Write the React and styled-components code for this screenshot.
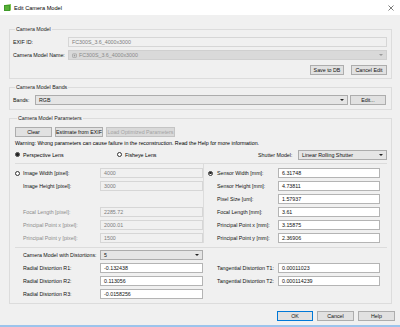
import styled, { createGlobalStyle } from "styled-components";

const GlobalStyle = createGlobalStyle`
  html, body {
    margin: 0;
    padding: 0;
    background: #f0f0f0;
  }
  body {
    font-family: "Liberation Sans", Arial, sans-serif;
    font-size: 5.3px;
    color: #000;
  }
`;

const Window = styled.div`
  box-sizing: border-box;
  width: 400px;
  height: 327px;
  display: flex;
  flex-direction: column;
  background: #f0f0f0;
  border-bottom: 2px solid #9cc4ec;
  overflow: hidden;
`;

const TitleBar = styled.div`
  display: flex;
  align-items: center;
  height: 15px;
  padding: 0 6px 0 4px;
  background: #fff;
  font-size: 5.6px;
  > span {
    flex: 1;
    margin-left: 3px;
  }
`;

const Body = styled.div`
  display: flex;
  flex-direction: column;
  padding: 11px 8px 0 9px;
  flex: 1;
`;

const Group = styled.fieldset`
  margin: ${(p) => p.$top || 0}px 0 0 0;
  padding: ${(p) => p.$pad || "5px 4px 3px 3px"};
  border: 1px solid #dcdcdc;
  border-radius: 0;
  min-width: 0;
  > legend {
    padding: 0 1px;
    margin-left: 2px;
    line-height: 6px;
    color: #222;
  }
`;

const Row = styled.div`
  display: flex;
  align-items: center;
  height: 10px;
  margin-top: ${(p) => p.$top || 0}px;
  justify-content: ${(p) => p.$justify || "flex-start"};
  gap: ${(p) => p.$gap || 0}px;
`;

const Label = styled.div`
  width: ${(p) => p.$w}px;
  flex: none;
  white-space: nowrap;
  color: ${(p) => (p.$dim ? "#8a8a8a" : "#111")};
`;

const Input = styled.div`
  box-sizing: border-box;
  height: ${(p) => p.$h || 10}px;
  width: ${(p) => (p.$w ? `${p.$w}px` : "auto")};
  flex: ${(p) => (p.$w ? "none" : 1)};
  display: flex;
  align-items: center;
  padding-left: 3px;
  border: 1px solid ${(p) => (p.$off ? "#d6d6d6" : "#b4b4b4")};
  background: ${(p) => (p.$off ? "#f0f0f0" : "#fff")};
  color: ${(p) => (p.$off ? "#7d7d7d" : "#111")};
  white-space: nowrap;
`;

const Select = styled.div`
  box-sizing: border-box;
  height: 10px;
  width: ${(p) => (p.$w ? `${p.$w}px` : "auto")};
  flex: ${(p) => (p.$w ? "none" : 1)};
  display: flex;
  align-items: center;
  gap: 2px;
  padding: 0 3px;
  border: 1px solid ${(p) => (p.$off ? "#cfcfcf" : "#acacac")};
  background: ${(p) => (p.$off ? "#d9d9d9" : "#e5e5e5")};
  color: ${(p) => (p.$off ? "#8a8a8a" : "#111")};
  white-space: nowrap;
  > span {
    flex: 1;
  }
`;

const Caret = styled.i`
  width: 0;
  height: 0;
  border-left: 2px solid transparent;
  border-right: 2px solid transparent;
  border-top: 2px solid ${(p) => (p.$off ? "#9a9a9a" : "#222")};
`;

const Button = styled.div`
  box-sizing: border-box;
  height: 10px;
  width: ${(p) => p.$w}px;
  flex: none;
  display: flex;
  align-items: center;
  justify-content: center;
  border: 1px solid ${(p) => (p.$primary ? "#0078d7" : p.$off ? "#c4c4c4" : "#adadad")};
  background: ${(p) => (p.$off ? "#d9d9d9" : "#e1e1e1")};
  color: ${(p) => (p.$off ? "#a3a3a3" : "#111")};
  white-space: nowrap;
`;

const Radio = styled.span`
  box-sizing: border-box;
  width: 5px;
  height: 5px;
  flex: none;
  border-radius: 50%;
  border: 0.8px solid #333;
  background: #fff;
  display: flex;
  align-items: center;
  justify-content: center;
  margin-right: ${(p) => p.$gap || 3}px;
  &::after {
    content: "";
    width: 2.2px;
    height: 2.2px;
    border-radius: 50%;
    background: ${(p) => (p.$on ? "#222" : "transparent")};
  }
`;

const Warning = styled.div`
  margin-top: 3px;
  line-height: 6px;
  white-space: nowrap;
`;

const Split = styled.div`
  display: grid;
  grid-template-columns: 188px 1fr;
  margin: ${(p) => p.$top || 0}px 0 0 0;
  border-top: 1px solid #dcdcdc;
`;

const Column = styled.div`
  display: flex;
  flex-direction: column;
  gap: 3px;
  padding: ${(p) => p.$pad || "4px 0 0 0"};
  border-left: ${(p) => (p.$divider ? "1px solid #dcdcdc" : "none")};
`;

const Slot = styled.span`
  width: ${(p) => p.$w}px;
  flex: none;
  display: flex;
`;

const Footer = styled.div`
  display: flex;
  justify-content: flex-end;
  gap: 4px;
  padding-top: 7px;
  margin-right: -3px;
`;

function AppIcon() {
  return (
    <svg width="7" height="7" viewBox="0 0 7 7">
      <rect x="0" y="1" width="6" height="6" fill="#3f9a2a" />
      <path d="M1 1 L7 0 L7 6 L6 7 L6 1 Z" fill="#7cc24a" />
      <rect x="1" y="2" width="4" height="4" fill="#58b036" />
    </svg>
  );
}

function CloseIcon() {
  return (
    <svg width="6" height="6" viewBox="0 0 6 6">
      <path d="M0.5 0.5 L5.5 5.5 M5.5 0.5 L0.5 5.5" stroke="#444" strokeWidth="0.7" />
    </svg>
  );
}

function CamIcon() {
  return (
    <svg width="5" height="5" viewBox="0 0 5 5">
      <rect x="0.4" y="0.9" width="4.2" height="3.4" rx="0.6" fill="none" stroke="#9a9a9a" strokeWidth="0.7" />
      <circle cx="2.5" cy="2.6" r="0.8" fill="#9a9a9a" />
    </svg>
  );
}

const pixelRows = [
  { label: "Image Width [pixel]:", value: "4000", radio: true },
  { label: "Image Height [pixel]:", value: "3000" },
  null,
  { label: "Focal Length [pixel]:", value: "2285.72", dim: true },
  { label: "Principal Point x [pixel]:", value: "2000.01", dim: true },
  { label: "Principal Point y [pixel]:", value: "1500", dim: true },
];

const mmRows = [
  { label: "Sensor Width [mm]:", value: "6.31748", radio: true },
  { label: "Sensor Height [mm]:", value: "4.73811" },
  { label: "Pixel Size [um]:", value: "1.57937" },
  { label: "Focal Length [mm]:", value: "3.61" },
  { label: "Principal Point x [mm]:", value: "3.15875" },
  { label: "Principal Point y [mm]:", value: "2.36906" },
];

const radial = [
  { label: "Radial Distortion R1:", value: "-0.132438" },
  { label: "Radial Distortion R2:", value: "0.113056" },
  { label: "Radial Distortion R3:", value: "-0.0158256" },
];

const tangential = [
  { label: "Tangential Distortion T1:", value: "0.00011023" },
  { label: "Tangential Distortion T2:", value: "0.000114239" },
];

export default function App() {
  return (
    <Window>
      <GlobalStyle />
      <TitleBar>
        <AppIcon />
        <span>Edit Camera Model</span>
        <CloseIcon />
      </TitleBar>

      <Body>
        <Group>
          <legend>Camera Model</legend>
          <Row>
            <Label $w={55}>EXIF ID:</Label>
            <Input $off>FC300S_3.6_4000x3000</Input>
          </Row>
          <Row $top={3}>
            <Label $w={55}>Camera Model Name:</Label>
            <Select $off>
              <CamIcon />
              <span>FC300S_3.6_4000x3000</span>
              <Caret $off />
            </Select>
          </Row>
          <Row $top={5} $justify="flex-end" $gap={7}>
            <Button $w={34}>Save to DB</Button>
            <Button $w={36}>Cancel Edit</Button>
          </Row>
        </Group>

        <Group $top={5} $pad="5px 5px 4px 3px">
          <legend>Camera Model Bands</legend>
          <Row $gap={2}>
            <Label $w={20}>Bands:</Label>
            <Select>
              <span>RGB</span>
              <Caret />
            </Select>
            <Button $w={36}>Edit...</Button>
          </Row>
        </Group>

        <Group $top={5} $pad="6px 4px 4px 5px">
          <legend>Camera Model Parameters</legend>
          <Row $gap={3}>
            <Button $w={37}>Clear</Button>
            <Button $w={48}>Estimate from EXIF</Button>
            <Button $w={69} $off>
              Load Optimized Parameters
            </Button>
          </Row>
          <Warning>
            Warning: Wrong parameters can cause failure in the reconstruction. Read the Help for
            more information.
          </Warning>
          <Row $top={4}>
            <Slot $w={102}>
              <Radio $on />
              Perspective Lens
            </Slot>
            <Slot $w={141}>
              <Radio />
              Fisheye Lens
            </Slot>
            <Label $w={40}>Shutter Model:</Label>
            <Select>
              <span>Linear Rolling Shutter</span>
              <Caret />
            </Select>
          </Row>

          <Split $top={3}>
            <Column>
              {pixelRows.map((r, i) =>
                r ? (
                  <Row key={i}>
                    <Slot $w={8}>{r.radio && <Radio />}</Slot>
                    <Label $w={77} $dim={r.dim}>
                      {r.label}
                    </Label>
                    <Input $off $w={103}>
                      {r.value}
                    </Input>
                  </Row>
                ) : (
                  <Row key={i} />
                )
              )}
            </Column>
            <Column $divider $pad="4px 0 0 4px">
              {mmRows.map((r, i) => (
                <Row key={i}>
                  <Slot $w={9}>{r.radio && <Radio $on />}</Slot>
                  <Label $w={61}>{r.label}</Label>
                  <Input $w={102}>{r.value}</Input>
                </Row>
              ))}
            </Column>
          </Split>

          <Split $top={4}>
            <Column $pad="2px 0 0 0">
              <Row>
                <Slot $w={8} />
                <Label $w={77}>Camera Model with Distortions:</Label>
                <Select $w={103}>
                  <span>5</span>
                  <Caret />
                </Select>
              </Row>
              {radial.map((r) => (
                <Row key={r.label}>
                  <Slot $w={8} />
                  <Label $w={77}>{r.label}</Label>
                  <Input $w={103}>{r.value}</Input>
                </Row>
              ))}
            </Column>
            <Column $pad="15px 0 0 5px">
              {tangential.map((r) => (
                <Row key={r.label}>
                  <Slot $w={9} />
                  <Label $w={61}>{r.label}</Label>
                  <Input $w={102}>{r.value}</Input>
                </Row>
              ))}
            </Column>
          </Split>
        </Group>

        <Footer>
          <Button $w={36} $primary>
            OK
          </Button>
          <Button $w={37}>Cancel</Button>
          <Button $w={37}>Help</Button>
        </Footer>
      </Body>
    </Window>
  );
}
